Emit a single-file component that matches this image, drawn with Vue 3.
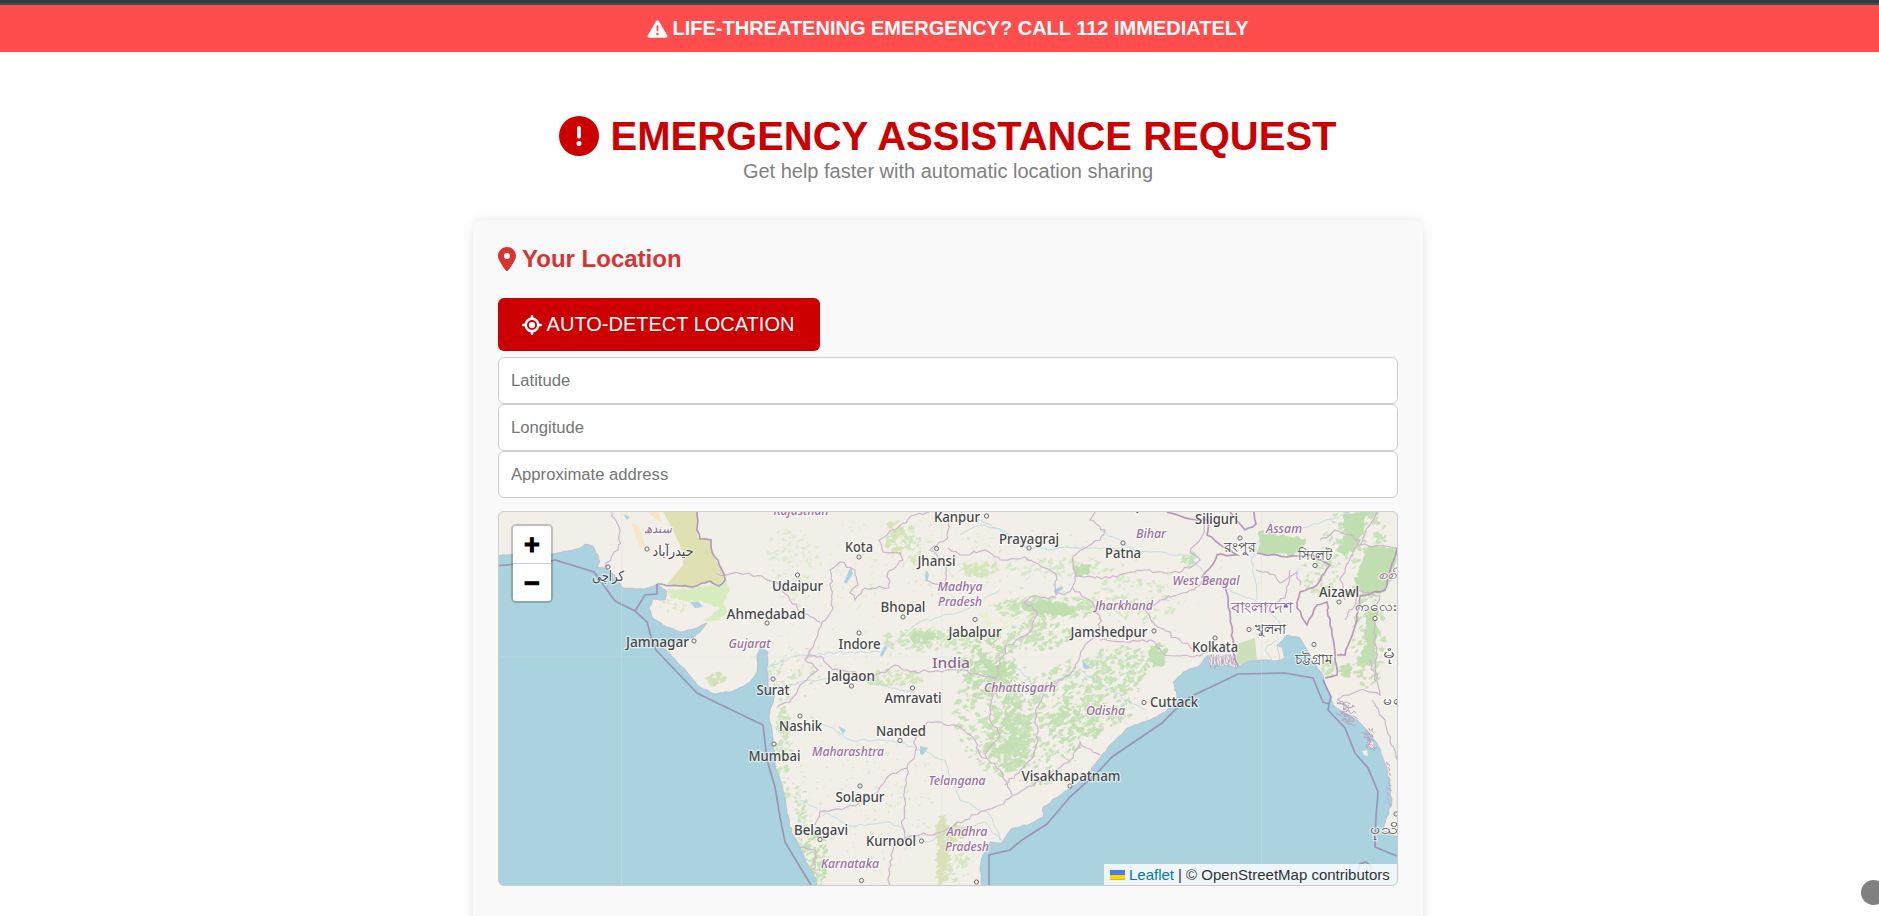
<template>
  <div class="page">
    <div class="top-strip"></div>
    <div class="alert">
      <svg class="alert-icon" viewBox="0 0 512 512"><path :d="icons.warning" /></svg>
      <span class="alert-text">LIFE-THREATENING EMERGENCY? CALL 112 IMMEDIATELY</span>
    </div>

    <header class="header">
      <h1>
        <svg class="title-icon" viewBox="0 0 512 512"><path :d="icons.circle" /></svg>
        <span>EMERGENCY ASSISTANCE REQUEST</span>
      </h1>
      <p>Get help faster with automatic location sharing</p>
    </header>

    <section class="card">
      <h2>
        <svg class="pin-icon" viewBox="0 0 384 512"><path :d="icons.pin" /></svg>
        <span>Your Location</span>
      </h2>

      <button class="detect">
        <svg class="detect-icon" viewBox="0 0 512 512"><path :d="icons.target" /></svg>
        <span>AUTO-DETECT LOCATION</span>
      </button>

      <input v-model="latitude" type="text" placeholder="Latitude">
      <input v-model="longitude" type="text" placeholder="Longitude">
      <input v-model="address" type="text" placeholder="Approximate address">

      <div class="map">
        <svg class="tiles" viewBox="499 512 898 373" preserveAspectRatio="none">
          <defs>
            <clipPath id="land"><path :d="mainland" /></clipPath>
          </defs>

          <g class="terrain">
            <path class="land" :d="mainland" />
            <path class="land" d="M1366 740l7 2 1 6-5 1zM1362 751l5-1 1 6-4-1zM1262 649l10-5 10 4 2 10-9 3-12-2z" />

            <g clip-path="url(#land)">
              <!-- Vegetation -->
              <path v-for="(p, i) in patches" :key="'p' + i" :d="p.d" :fill="p.fill" />
              <path v-for="(w, i) in woods" :key="'w' + i" fill="#c0deb0" :d="w" />
              <path fill="#cce0ba" d="M1237 644l18-6 2 25-21 2z" />
              <path fill="#dfe1b3" d="M663 512L698 512L697 537L710 540L713 555L723 573L722 585L703 582L690 588L667 584L683 565L683 552L672 528z" />
              <path fill="#d8edbf" :d="saltMarsh" />
              <path fill="#f7e6c5" d="M631 522l8 4 6 20-5 2zM648 512h11l2 10-6-3z" />

              <!-- Lakes and rivers -->
              <path fill="#aad3df" d="M851 566l2 8-7 10-2-2zM885 645l2 3-5 9-2-2zM926 570l3 4-2 8-2-5zM1054 590l8-4 1 3-8 5zM838 726l8 4-3 4zM920 746l8 2-5 7-3-1zM1082 660l9 8-7 1zM690 602l9 0 4 5-8 1zM623 514l7 3-3 3z" />
              <path v-for="(r, i) in rivers" :key="'r' + i" class="river" :d="r" />

              <!-- State borders -->
              <path v-for="(b, i) in stateBorders" :key="'s' + i" class="state" :d="b" />
              <path v-for="(b, i) in countryBorders" :key="'c' + i" class="country" :d="b" />
            </g>
            <path class="coast" :d="mainland" />
            <path class="creeks" :d="creeks" />
            <path v-for="(b, i) in seaBorders" :key="'m' + i" class="sea" :d="b" />
          </g>

          <path class="grid" d="M621.5 512V885M942 512V885M1261.5 512V885M499 657H1397" />

          <g>
            <circle v-for="(c, i) in towns" :key="'t' + i" class="town" :cx="c[0]" :cy="c[1]" r="2.1" />
          </g>

          <text
            v-for="(l, i) in labels"
            :key="'l' + i"
            :class="['label', l[4]]"
            :x="l[1]"
            :y="l[2]"
            :textLength="l[3]"
            lengthAdjust="spacingAndGlyphs"
          >{{ l[0] }}</text>
        </svg>

        <div class="zoom">
          <a class="zoom-btn">+</a>
          <a class="zoom-btn">−</a>
        </div>

        <div class="attribution">
          <svg class="flag" viewBox="0 0 15 10"><path fill="#4c7be1" d="M0 0h15v5H0z" /><path fill="#ffd500" d="M0 5h15v4H0z" /><path fill="#e0bc00" d="M0 9h15v1H0z" /></svg>
          <a>Leaflet</a><span class="credit">| © OpenStreetMap contributors</span>
        </div>
      </div>
    </section>

    <div class="bubble"></div>
  </div>
</template>

<script setup>
import { ref } from 'vue'

const latitude = ref('')
const longitude = ref('')
const address = ref('')

const icons = {
  warning: 'M256 32c14.200 0 27.300 7.500 34.500 19.800l216 368c7.300 12.400 7.300 27.700 .2 40.100S486.300 480 472 480H40c-14.300 0-27.600-7.700-34.700-20.100s-7-27.800 .2-40.100l216-368C228.700 39.500 241.800 32 256 32zm0 128c-13.300 0-24 10.700-24 24V296c0 13.300 10.700 24 24 24s24-10.700 24-24V184c0-13.300-10.700-24-24-24zm32 224a32 32 0 1 0 -64 0 32 32 0 1 0 64 0z',
  circle: 'M256 512A256 256 0 1 0 256 0a256 256 0 1 0 0 512zm0-384c13.300 0 24 10.700 24 24V264c0 13.300-10.700 24-24 24s-24-10.700-24-24V152c0-13.300 10.700-24 24-24zM224 352a32 32 0 1 1 64 0 32 32 0 1 1 -64 0z',
  pin: 'M215.700 499.200C267 435 384 279.400 384 192C384 86 298 0 192 0S0 86 0 192c0 87.400 117 243 168.300 307.200c12.300 15.300 35.100 15.300 47.400 0zM192 128a64 64 0 1 1 0 128 64 64 0 1 1 0-128z',
  target: 'M256 0c17.700 0 32 14.300 32 32V66.700C368.400 80.100 431.900 143.600 445.300 224H480c17.700 0 32 14.300 32 32s-14.300 32-32 32H445.300C431.900 368.400 368.400 431.900 288 445.300V480c0 17.700-14.300 32-32 32s-32-14.300-32-32V445.300C143.600 431.900 80.100 368.400 66.700 288H32c-17.700 0-32-14.300-32-32s14.300-32 32-32H66.700C80.100 143.600 143.600 80.100 224 66.700V32c0-17.700 14.300-32 32-32zM128 256a128 128 0 1 0 256 0 128 128 0 1 0 -256 0zm128-80a80 80 0 1 1 0 160 80 80 0 1 1 0-160z'
}

// Small seeded generator, so the map is the same on every load
let seed = 7
function rand () {
  seed = (seed * 16807) % 2147483647
  return seed / 2147483647
}

// Breaks each segment up so that it looks like a surveyed line
function rough (points, amp = 1.6, step = 5) {
  let d = `M${points[0][0]} ${points[0][1]}`
  for (let i = 1; i < points.length; i++) {
    const [x0, y0] = points[i - 1]
    const [x1, y1] = points[i]
    const n = Math.max(1, Math.round(Math.hypot(x1 - x0, y1 - y0) / step))
    for (let k = 1; k <= n; k++) {
      const j = k === n ? 0 : amp
      const x = x0 + (x1 - x0) * k / n + (rand() - 0.5) * 2 * j
      const y = y0 + (y1 - y0) * k / n + (rand() - 0.5) * 2 * j
      d += `L${x.toFixed(1)} ${y.toFixed(1)}`
    }
  }
  return d
}

function line (points) {
  return 'M' + points.map(p => p.join(' ')).join('L')
}

const mainland = rough([
  [490, 505], [490, 555], [507, 555], [553, 554], [567, 551], [580, 548], [585, 544], [593, 546], [598, 555], [600, 562], [597, 567],
  [605, 568], [612, 573], [618, 580], [623, 588], [637, 589], [647, 588], [657, 584], [667, 591], [665, 600], [653, 599], [649, 608],
  [653, 618], [667, 627], [682, 632], [697, 628], [707, 623], [700, 632], [693, 638], [675, 642], [662, 645], [673, 657], [687, 672],
  [700, 687], [715, 694], [730, 692], [750, 682], [757, 672], [757, 655], [762, 647], [768, 652], [767, 668], [768, 685], [775, 695],
  [769, 717], [772, 730], [773, 743], [775, 763], [783, 790], [787, 813], [792, 833], [800, 847], [807, 863], [815, 877], [818, 890],
  [982, 890], [980, 867], [983, 855], [990, 842], [1002, 843], [1012, 828], [1030, 824], [1043, 817], [1043, 807], [1067, 790],
  [1083, 780], [1100, 758], [1113, 742], [1127, 728], [1150, 720], [1167, 710], [1177, 697], [1173, 682], [1183, 672], [1200, 665],
  [1208, 655], [1210, 665], [1237, 667], [1247, 662], [1263, 660], [1280, 660], [1277, 645], [1287, 635], [1300, 638], [1307, 650],
  [1313, 662], [1323, 675], [1327, 688], [1333, 705], [1340, 710], [1357, 720], [1367, 730], [1377, 743], [1387, 767], [1390, 787],
  [1392, 803], [1387, 817], [1383, 830], [1405, 840], [1405, 505]
], 0.8, 4)

const woods = [
  [[1259, 531], [1306, 539], [1303, 548], [1292, 556], [1268, 554], [1257, 552], [1259, 531]],
  [[1343, 514], [1366, 512], [1364, 530], [1355, 550], [1344, 556], [1336, 550], [1345, 535], [1343, 514]],
  [[1368, 546], [1397, 548], [1395, 572], [1384, 592], [1366, 594], [1352, 588], [1360, 570], [1368, 546]],
  [[1366, 607], [1377, 610], [1376, 665], [1358, 663], [1366, 640], [1366, 607]],
  [[1074, 565], [1092, 565], [1088, 575], [1076, 576], [1074, 565]],
  [[1022, 602], [1045, 600], [1066, 604], [1074, 611], [1062, 617], [1024, 611], [1022, 602]],
  [[995, 665], [1008, 662], [1002, 680], [984, 668], [978, 650], [995, 665]]
].map(w => rough(w, 2.2, 3) + 'z')

const saltMarsh = rough([
  [667, 590], [690, 588], [710, 585], [727, 580], [729, 592], [723, 602], [727, 612], [720, 620], [703, 620], [720, 608],
  [703, 602], [690, 602], [670, 598], [667, 590]
], 1.6, 3)

// [cx, cy, rx, ry, count, size, fill]
const clusters = [
  [1030, 575, 120, 45, 150, 2.2, '#d9e9cd'],
  [900, 560, 110, 45, 140, 2.2, '#dfeccf'],
  [850, 640, 110, 55, 130, 2, '#dfebd3'],
  [865, 800, 75, 75, 190, 2, '#d9e9cd'],
  [1270, 570, 110, 50, 70, 1.8, '#dcead0'],
  [1000, 715, 45, 60, 330, 3.6, '#c9e2ba'],
  [985, 665, 28, 32, 170, 4, '#c3dfb3'],
  [1008, 735, 22, 36, 190, 4.5, '#c3dfb3'],
  [1085, 695, 55, 36, 260, 3.6, '#c9e2ba'],
  [1075, 725, 26, 24, 90, 4, '#c5e0b5'],
  [1040, 750, 40, 36, 130, 3.2, '#c9e2ba'],
  [1045, 608, 50, 13, 130, 3.8, '#c9e2ba'],
  [1035, 636, 38, 14, 100, 3.8, '#c9e2ba'],
  [925, 640, 45, 12, 120, 3.6, '#cfe5bf'],
  [925, 638, 14, 6, 40, 3.8, '#c3dfb3'],
  [890, 678, 34, 8, 60, 3.4, '#d2e4be'],
  [896, 538, 10, 16, 50, 4, '#d5e3b8'],
  [914, 545, 9, 20, 40, 3, '#d2e6c3'],
  [983, 570, 24, 6, 45, 4, '#d6e6bb'],
  [1060, 567, 55, 10, 70, 3, '#d4e8c6'],
  [783, 750, 8, 55, 100, 3.2, '#cde4be'],
  [800, 815, 6, 35, 50, 3, '#cde4be'],
  [815, 858, 12, 30, 90, 3.6, '#c3dfb3'],
  [790, 560, 22, 40, 80, 3, '#dcebcc'],
  [795, 672, 28, 28, 50, 2.6, '#d2e6c3'],
  [715, 680, 12, 6, 30, 3.4, '#d2e2b8'],
  [675, 606, 18, 8, 18, 2.4, '#d6e6c8'],
  [942, 850, 5, 34, 110, 4.5, '#dae1b8'],
  [952, 836, 14, 10, 50, 4.5, '#dae1b8'],
  [958, 868, 12, 16, 40, 3, '#d5e6c3'],
  [1130, 600, 50, 24, 120, 3.2, '#d4e8c6'],
  [1120, 665, 30, 20, 90, 3.6, '#c9e2ba'],
  [1158, 655, 8, 11, 50, 4.5, '#c3dfb3'],
  [1190, 560, 7, 8, 22, 3.4, '#c9e2ba'],
  [1320, 575, 18, 20, 50, 3.2, '#cde4be'],
  [1355, 540, 35, 34, 110, 4, '#c8e1b9'],
  [1368, 640, 16, 50, 90, 4, '#c8e1b9'],
  [1346, 670, 4, 8, 24, 4, '#c3dfb3'],
  [1328, 670, 7, 10, 24, 3.4, '#c9e2ba'],
  [1000, 620, 20, 14, 30, 3, '#ecefce']
]

function blob (cx, cy, r) {
  const pts = []
  const squash = 0.45 + rand() * 0.5
  const slope = rand() * 1.2 - 0.8
  for (let i = 0; i < 9; i++) {
    const a = i * Math.PI * 2 / 9
    const k = r * (0.3 + rand() * 0.9)
    const px = Math.cos(a) * k
    const py = Math.sin(a) * k * squash
    pts.push([(cx + px).toFixed(1), (cy + py + px * slope).toFixed(1)])
  }
  return line(pts) + 'z'
}

const patches = []
for (const [cx, cy, rx, ry, count, size, fill] of clusters) {
  for (let i = 0; i < count; i++) {
    const a = rand() * Math.PI * 2
    const t = Math.sqrt(rand())
    patches.push({ d: blob(cx + Math.cos(a) * rx * t, cy + Math.sin(a) * ry * t, size * (0.4 + rand() * 0.8)), fill })
  }
}

const rivers = [
  [[960, 512], [985, 523], [1010, 535], [1030, 549], [1075, 548], [1110, 548], [1150, 552], [1190, 556], [1210, 580], [1232, 592], [1255, 600], [1275, 617], [1287, 640]],
  [[1350, 512], [1322, 522], [1290, 530], [1260, 535], [1251, 560], [1255, 580], [1256, 600]],
  [[960, 535], [980, 525], [1000, 530], [1020, 545], [1030, 548]],
  [[1100, 530], [1120, 540], [1135, 550]],
  [[768, 668], [800, 655], [850, 652], [882, 652], [920, 622], [965, 610], [1000, 590]],
  [[768, 690], [810, 680], [850, 678], [900, 690], [940, 700]],
  [[810, 716], [850, 740], [900, 742], [945, 760], [960, 800], [990, 815], [1002, 842]],
  [[800, 800], [850, 826], [890, 822], [925, 842], [955, 830], [985, 822], [1000, 840]],
  [[1010, 660], [1040, 690], [1080, 670], [1110, 690], [1145, 710]],
  [[1276, 640], [1265, 650], [1272, 660]]
].map(r => rough(r, 1.4, 5))

const stateBorders = [
  [[717, 574], [745, 574], [762, 576], [780, 585], [790, 600], [800, 612], [820, 622]],
  [[605, 567], [618, 550], [620, 530], [612, 512]],
  [[950, 509], [915, 515], [893, 530], [879, 540], [883, 552], [900, 553], [903, 560], [888, 572], [889, 588], [865, 588], [855, 600], [850, 593], [858, 585], [855, 570], [840, 562], [830, 570], [833, 608], [822, 622], [818, 635], [810, 650], [805, 660], [818, 670], [800, 685], [790, 702], [778, 706]],
  [[805, 658], [820, 656], [830, 667], [850, 672], [872, 680], [895, 665], [910, 672], [960, 670], [995, 678], [1000, 660], [1008, 645], [1030, 632], [1038, 612], [1024, 602], [1030, 597], [1056, 598]],
  [[950, 520], [948, 538], [930, 550], [946, 566], [946, 585], [925, 580]],
  [[948, 548], [960, 555], [985, 550], [1000, 560], [1025, 557], [1045, 568], [1056, 574], [1056, 595], [1070, 592], [1075, 577], [1073, 556], [1090, 545], [1100, 540], [1105, 530], [1090, 520], [1095, 512]],
  [[1075, 577], [1110, 578], [1145, 570], [1170, 573], [1190, 568], [1200, 560], [1190, 552], [1203, 535], [1205, 520]],
  [[1073, 588], [1090, 600], [1100, 618], [1100, 632], [1085, 645], [1075, 668], [1062, 680], [1045, 686]],
  [[1100, 640], [1125, 642], [1150, 640], [1165, 655], [1200, 656], [1208, 652]],
  [[1205, 580], [1190, 590], [1160, 600], [1145, 610], [1155, 625], [1180, 640], [1195, 650]],
  [[995, 678], [990, 720], [1000, 735], [985, 755], [1000, 770], [1010, 790], [1012, 795]],
  [[1045, 686], [1035, 720], [1038, 740], [1030, 760], [1015, 775], [1005, 785]],
  [[928, 722], [960, 727], [975, 740], [980, 755], [990, 758]],
  [[928, 722], [915, 740], [915, 755], [907, 768], [890, 775], [873, 795], [855, 806], [820, 812], [815, 825]],
  [[907, 768], [905, 800], [902, 825], [905, 838], [893, 850], [888, 880], [890, 885]],
  [[905, 838], [940, 832], [955, 825], [980, 812], [1000, 805], [1013, 795], [1050, 775], [1070, 760], [1080, 742], [1100, 755]],
  [[800, 847], [815, 850], [815, 868], [808, 870]],
  [[1256, 570], [1275, 575], [1280, 583], [1297, 572], [1300, 585]],
  [[1290, 570], [1285, 598], [1262, 610]],
  [[1345, 620], [1355, 605], [1358, 590], [1380, 596], [1375, 625], [1377, 680]],
  [[1320, 540], [1335, 530], [1360, 540], [1340, 580], [1345, 600]],
  [[1377, 512], [1360, 545], [1397, 548]],
  [[1337, 700], [1360, 690], [1380, 695], [1370, 660]],
  [[1372, 700], [1385, 720], [1391, 745], [1397, 760]]
].map(b => rough(b, 1.7, 4))

const countryBorders = [
  [[657, 584], [680, 586], [693, 587], [710, 581], [719, 586], [725, 580], [722, 570], [712, 552], [711, 540], [700, 539], [697, 530], [697, 512]],
  [[1167, 512], [1190, 519], [1208, 520], [1207, 535], [1223, 547], [1237, 555], [1217, 555], [1210, 568], [1202, 577], [1225, 585], [1230, 612], [1233, 645], [1238, 672]],
  [[1230, 512], [1245, 530], [1256, 524], [1254, 512]],
  [[1257, 553], [1287, 557], [1313, 555], [1330, 565], [1317, 585], [1300, 592], [1297, 608], [1307, 625], [1317, 605], [1327, 602], [1330, 625], [1335, 655], [1337, 675], [1325, 678]],
  [[1397, 548], [1385, 590], [1360, 596], [1357, 620], [1345, 655], [1337, 655]]
].map(b => rough(b, 1, 5))

const seaBorders = [
  [[499, 565.5], [548, 562], [555, 560], [594, 572], [600, 580], [615, 601], [635, 611], [647, 622], [652, 640], [656, 650], [675, 670], [697, 693], [713, 701], [763, 725], [767, 760], [775, 787], [780, 817], [785, 842], [800, 867], [811, 885]],
  [[635, 611], [645, 595], [657, 594], [657, 584]],
  [[989, 885], [989, 855], [1010, 850], [1022, 840], [1047, 824], [1070, 797], [1100, 770], [1112, 757], [1162, 723], [1178, 707], [1190, 697], [1238, 674], [1285, 673], [1313, 678], [1320, 695], [1323, 702], [1329, 704], [1331, 697], [1323, 680]],
  [[1329, 704], [1328, 710], [1345, 728], [1355, 753], [1368, 768], [1378, 792], [1376, 817], [1375, 847], [1397, 856]],
  [[1358, 872], [1360, 864], [1366, 862], [1371, 866], [1370, 874]]
].map(line)

// Tangle of channels at the river mouths
const creeks = [
  ...Array.from({ length: 16 }, (_, i) => rough([[1210 + i * 1.7, 654 + rand() * 3], [1211 + i * 1.7, 664 + rand() * 5]], 1.2, 3)),
  ...Array.from({ length: 14 }, (_, i) => rough([[1336 + rand() * 16, 700 + i * 1.6], [1342 + rand() * 16, 704 + i * 1.6]], 2, 2)),
  ...Array.from({ length: 12 }, (_, i) => rough([[1361 + rand() * 10, 728 + i * 1.6], [1367 + rand() * 10, 733 + i * 1.6]], 2, 2)),
  ...Array.from({ length: 9 }, (_, i) => rough([[1386 + rand() * 3, 762 + i * 5], [1389 + rand() * 3, 766 + i * 5]], 1.5, 2))
].join('')

const towns = [
  [647, 549], [608, 567], [767, 623], [694, 641], [773, 679], [797.5, 575], [986.500, 516], [859, 557], [1029, 548], [936.5, 548.5],
  [903, 617], [859, 633], [975, 619.5], [851.5, 686], [912.5, 688], [1123, 543], [1240, 538], [1315, 565.5], [1339, 602],
  [1249, 629.5], [1215, 638], [1314, 644.5], [1154, 631], [1144, 702.5], [1375, 618.5], [774, 744], [800, 716], [900, 740.5],
  [860, 786], [1070, 786], [820, 839.5], [921.5, 841], [861.5, 880.5], [976.500, 882], [1396, 814]
]

// [text, centre x, baseline, width, kind]
const labels = [
  ['سندھ', 658, 533, 28, 'region'],
  ['حيدرآباد', 673, 556, 41],
  ['کراچی', 608, 581, 32],
  ['Ahmedabad', 766, 619, 79],
  ['Jamnagar', 657.5, 647, 63],
  ['Gujarat', 749.5, 648, 42, 'region'],
  ['Surat', 773, 695, 33],
  ['Udaipur', 797.5, 591, 51],
  ['Rajasthan', 801, 514.5, 55, 'region'],
  ['Kota', 859, 552, 28],
  ['Kanpur', 957, 521.5, 46],
  ['Gorakhpur', 1121, 510, 80],
  ['Prayagraj', 1029, 544, 60],
  ['Jhansi', 936.5, 566, 38],
  ['Madhya', 960, 591, 45, 'region'],
  ['Pradesh', 960, 606, 44, 'region'],
  ['Bhopal', 903, 612, 45],
  ['Indore', 859.5, 649, 42],
  ['Jabalpur', 975, 637, 53],
  ['India', 951, 667.5, 38, 'nation'],
  ['Jalgaon', 851, 681, 48],
  ['Amravati', 913, 703, 57],
  ['Chhattisgarh', 1020, 692, 72, 'region'],
  ['Siliguri', 1216.5, 524, 43],
  ['Assam', 1284, 533, 36, 'region'],
  ['Bihar', 1151, 538, 30, 'region'],
  ['Patna', 1123, 558, 36],
  ['West Bengal', 1206, 585, 67, 'region'],
  ['Jharkhand', 1124, 610, 58, 'region'],
  ['Jamshedpur', 1109, 637, 77],
  ['রংপুর', 1240, 552, 32],
  ['সিলেট', 1315, 560, 35],
  ['Aizawl', 1339, 597, 40],
  ['বাংলাদেশ', 1262, 613, 63, 'nation'],
  ['ကလေး', 1376, 611, 43],
  ['খুলনা', 1270, 634, 31],
  ['Kolkata', 1215, 652, 46],
  ['চট্টগ্রাম', 1313.5, 664, 38],
  ['စစ်ကိုင်း', 1402, 579, 48, 'region'],
  ['မုံရွာ', 1401, 658, 36],
  ['မကွေး', 1403, 705, 40],
  ['Cuttack', 1174, 707, 48],
  ['Odisha', 1105.5, 715, 39, 'region'],
  ['Nashik', 800.5, 730.5, 43],
  ['Mumbai', 774.5, 760.5, 52],
  ['Nanded', 901, 736, 50],
  ['Maharashtra', 848, 755.5, 72, 'region'],
  ['Telangana', 957, 785, 57, 'region'],
  ['Solapur', 860, 802, 49],
  ['Visakhapatnam', 1071, 780.5, 99],
  ['Belagavi', 821, 835, 54],
  ['Kurnool', 891, 845.5, 50],
  ['Andhra', 967, 835.5, 41, 'region'],
  ['Pradesh', 967, 851, 44, 'region'],
  ['Karnataka', 850, 868, 58, 'region'],
  ['ပုသိမ်', 1390, 834, 40]
]
</script>

<style>
body {
  margin: 0;
  overflow: hidden;
  background: #fff;
}
</style>

<style scoped>
.page {
  position: relative;
  height: 916px;
  overflow: hidden;
  display: flex;
  flex-direction: column;
  align-items: center;
  font-family: Arial, "Liberation Sans", sans-serif;
}
.top-strip {
  align-self: stretch;
  box-sizing: border-box;
  flex: none;
  height: 5px;
  background: #263f43;
  border-bottom: 2px solid #424b4d;
}
.alert {
  align-self: stretch;
  flex: none;
  height: 47px;
  padding-left: 16px;
  box-sizing: border-box;
  display: flex;
  align-items: center;
  justify-content: center;
  gap: 5px;
  background: #ff4d4d;
  color: #fff;
  font-size: 20px;
  font-weight: bold;
}
svg {
  display: block;
  flex: none;
  fill: currentColor;
}
.alert-icon {
  width: 21px;
  height: 20px;
}
.header {
  display: flex;
  flex-direction: column;
  align-items: center;
  padding-top: 61px;
  padding-left: 17px;
}
h1 {
  margin: 0;
  display: flex;
  align-items: center;
  gap: 11px;
  height: 46px;
  color: #c00;
  font-size: 40px;
  white-space: nowrap;
}
h1 span {
  padding-top: 1px;
}
.title-icon {
  width: 40px;
  height: 40px;
}
.header p {
  margin: 0;
  padding-top: 1px;
  line-height: 23px;
  color: #808080;
  font-size: 20px;
}
.card {
  box-sizing: border-box;
  width: 950px;
  height: 800px;
  flex: none;
  margin-top: 37px;
  margin-left: 17px;
  padding: 25px;
  display: flex;
  flex-direction: column;
  align-items: flex-start;
  background: #f9f9f9;
  border-radius: 10px;
  box-shadow: 0 0 12px rgba(0, 0, 0, .1);
}
h2 {
  margin: 0 0 25px;
  height: 28px;
  display: flex;
  align-items: center;
  gap: 6px;
  color: #d63333;
  font-size: 24px;
}
.pin-icon {
  width: 18px;
  height: 24px;
  margin-top: -1px;
}
.detect {
  box-sizing: border-box;
  width: 322px;
  height: 53px;
  margin: 0 0 6px;
  padding: 0 2px 0 0;
  display: flex;
  align-items: center;
  justify-content: center;
  gap: 5px;
  border: 0;
  border-radius: 6px;
  background: #c00;
  color: #fff;
  font: 20px Arial, "Liberation Sans", sans-serif;
}
.detect-icon {
  width: 20px;
  height: 20px;
}
input {
  box-sizing: border-box;
  width: 900px;
  height: 47px;
  margin: 0;
  padding: 0 12px;
  border: 1px solid #ccc;
  border-radius: 6px;
  background: #fff;
  font: 16.65px Arial, "Liberation Sans", sans-serif;
}
input::placeholder {
  color: #757575;
}
.map {
  position: relative;
  box-sizing: border-box;
  width: 900px;
  height: 375px;
  margin-top: 13px;
  overflow: hidden;
  border: 1px solid #ccc;
  border-radius: 6px;
  background: #aad3df;
}
.tiles {
  width: 898px;
  height: 373px;
}
.terrain {
  filter: blur(.5px);
}
.land {
  fill: #f2efe9;
}
.coast,
.creeks,
.river,
.state,
.country,
.sea,
.grid {
  fill: none;
}
.coast {
  stroke: #b7a6c0;
  stroke-width: .5;
}
.creeks {
  stroke: #b39fbb;
  stroke-width: .9;
}
.river {
  stroke: #b5d8e2;
  stroke-width: .8;
}
.state {
  stroke: #cdb6cd;
  stroke-width: 1.2;
}
.country {
  stroke: #b79ab8;
  stroke-width: 1.7;
}
.sea {
  stroke: #9a94b7;
  stroke-width: 1.7;
}
.grid {
  stroke: rgba(220, 225, 220, .35);
  stroke-width: 1;
}
.town {
  fill: #f4f2ee;
  stroke: #6c6c6c;
  stroke-width: 1;
}
.label {
  font-family: "Noto Sans", "DejaVu Sans", sans-serif;
  font-size: 14px;
  font-weight: 500;
  text-anchor: middle;
  fill: #484848;
  stroke: rgba(255, 255, 255, .6);
  stroke-width: 2.5px;
  stroke-linejoin: round;
  paint-order: stroke;
}
.region {
  font-size: 13px;
  font-style: italic;
  fill: #9a719b;
}
.nation {
  font-size: 15px;
  fill: #8d6490;
}
.zoom {
  position: absolute;
  top: 12px;
  left: 12px;
  border: 2px solid rgba(0, 0, 0, .2);
  border-radius: 5px;
  background-clip: padding-box;
}
.zoom-btn {
  display: block;
  width: 38px;
  height: 37px;
  background: #fff;
  color: #000;
  font: bold 27px/38px "Liberation Sans", sans-serif;
  -webkit-text-stroke: 1px #000;
  text-align: center;
}
.zoom-btn:first-child {
  border-bottom: 1px solid #ccc;
  border-radius: 3px 3px 0 0;
}
.zoom-btn:last-child {
  border-radius: 0 0 3px 3px;
}
.attribution {
  position: absolute;
  right: 0;
  bottom: 0;
  box-sizing: border-box;
  width: 293px;
  height: 21px;
  padding-left: 6px;
  display: flex;
  align-items: center;
  background: rgba(255, 255, 255, .8);
  color: #333;
  font-size: 15px;
  white-space: nowrap;
}
.attribution a {
  margin-left: 4px;
  color: #0078a8;
}
.credit {
  margin-left: 4px;
}
.flag {
  width: 15px;
  height: 10px;
}
.bubble {
  position: absolute;
  top: 880px;
  left: 1861px;
  width: 25px;
  height: 25px;
  border-radius: 50%;
  background: #808080;
}
</style>
